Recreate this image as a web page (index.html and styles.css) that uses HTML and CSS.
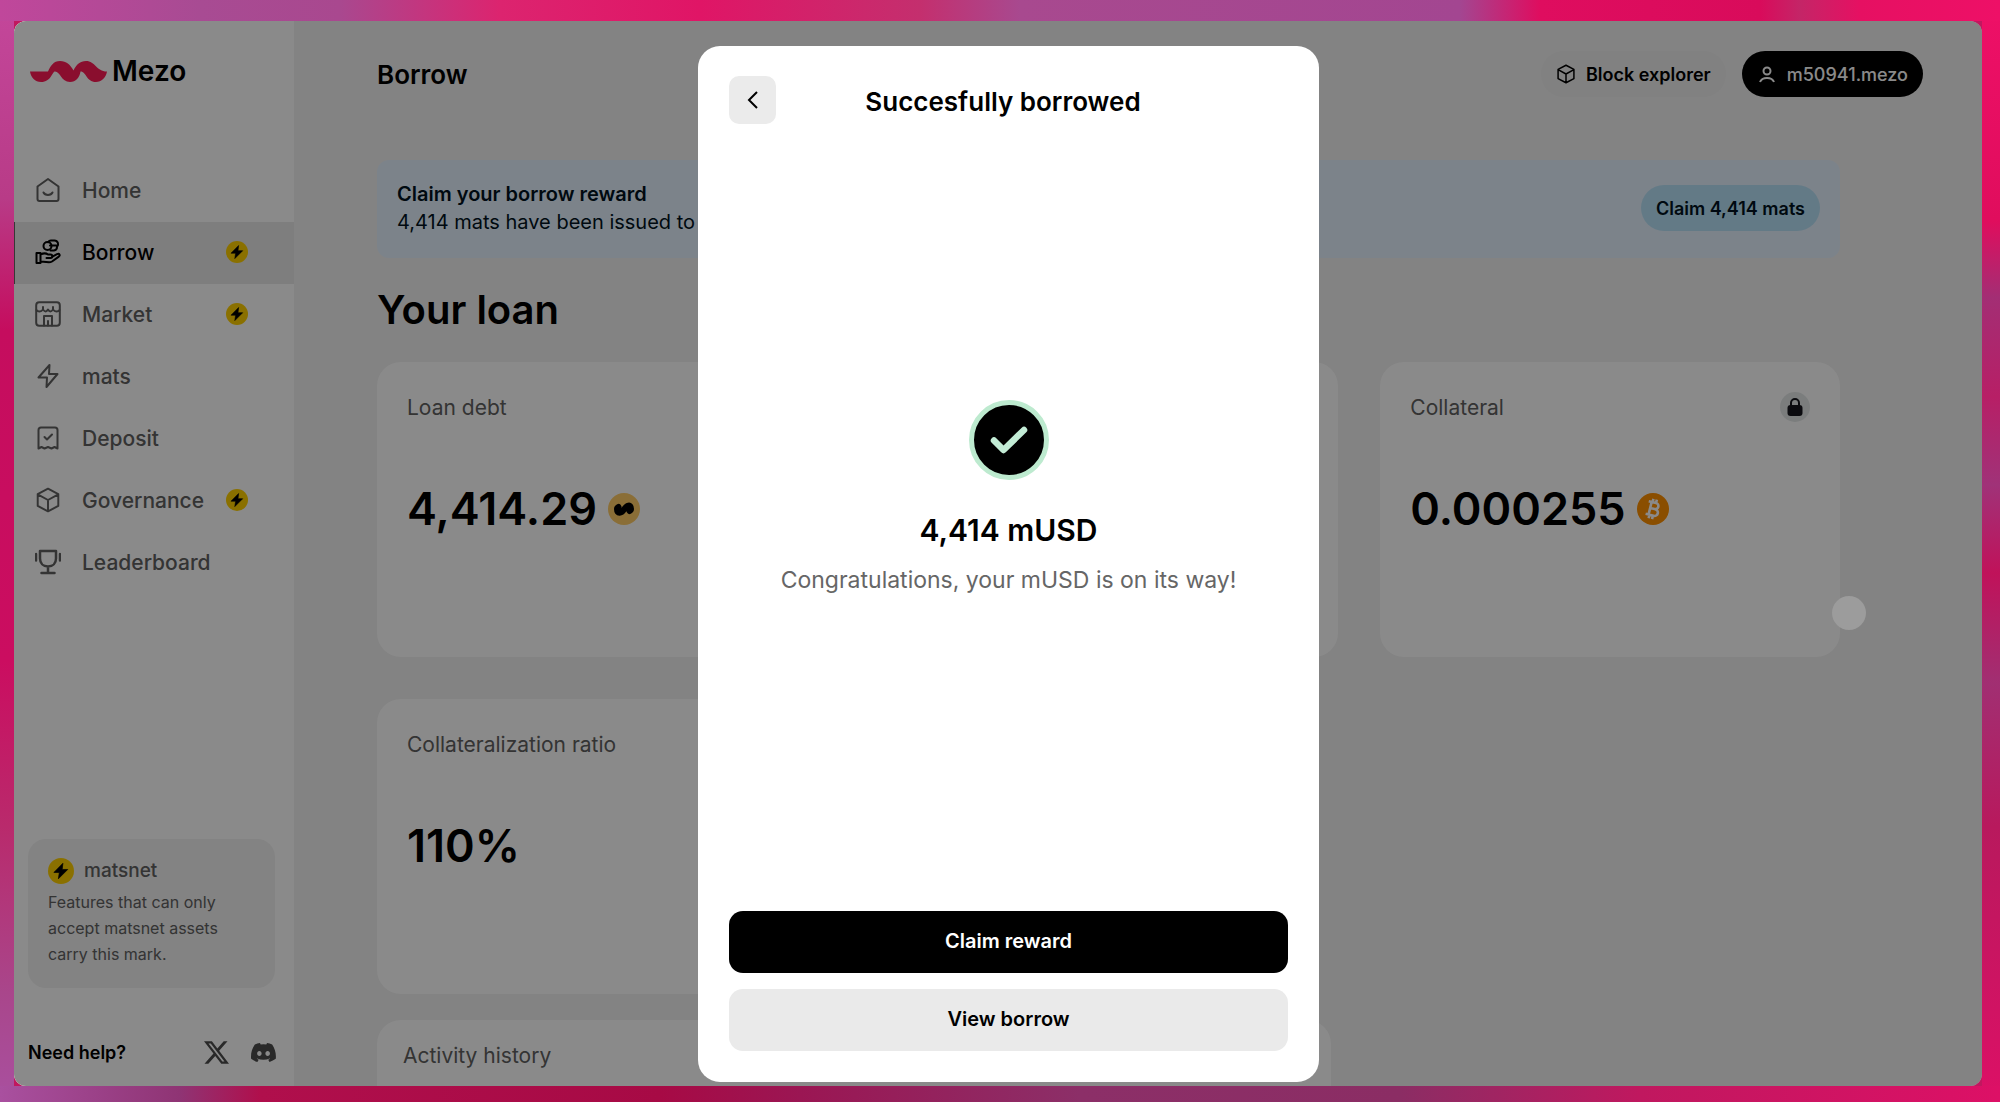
FILE: index.html
```html
<!DOCTYPE html>
<html lang="en">
<head>
  <meta charset="UTF-8" />
  <meta name="viewport" content="width=device-width, initial-scale=1.0" />
  <title>Mezo - Borrow</title>
  <link rel="stylesheet" href="styles.css">
</head>
<body>

  <!-- shared icons -->
  <svg class="sprite" aria-hidden="true">
    <symbol id="bolt-badge" viewBox="0 0 22 22">
      <circle cx="11" cy="11" r="11" fill="#ffd000" />
      <path d="M12.600 4.500 5 12.200h4.600l-.8 5.400 7.900-7.900h-4.700z" fill="#000" stroke="#000" stroke-width=".6" stroke-linejoin="round" />
    </symbol>
    <symbol id="cube" viewBox="0 0 24 24">
      <path d="M12 1.500 21.500 6.500v11L12 22.500 2.500 17.500v-11zM2.500 6.800 12 12l9.500-5.200M12 12v10.300" fill="none" stroke="currentColor" stroke-width="1.8" stroke-linejoin="round" />
    </symbol>
  </svg>

  <div class="window">

    <aside class="sidebar">
      <a class="logo" href="#">
        <svg width="77" height="21" viewBox="0 0 77 21">
          <path d="M0 10.500H18C20.500 5 23.500 0 30 0C36.500 0 40 3.500 43.500 9.500C46.500 3.500 50 0 56 0C65.500 0 66 10.500 77 10.500C76 16.500 71.500 21 66 21C56 21 56.500 10.500 50.500 10.500C49.500 16.500 46 21 40 21C31 21 30.500 10.500 25 10.500C22 10.500 21.500 21 11 21C5 21 1 16.500 0 10.500Z" fill="#ff1a56" />
        </svg>
        <span>Mezo</span>
      </a>

      <nav class="nav">
        <a href="#">
          <svg class="icon" viewBox="0 0 26 26"><path d="M13 2 23.500 9.500V22a2 2 0 0 1-2 2h-17a2 2 0 0 1-2-2V9.500zM8.500 15.500c1.500 3.200 7.500 3.200 9 0" /></svg>
          <span>Home</span>
        </a>
        <a href="#" class="active">
          <svg class="icon" viewBox="0 0 26 26"><path d="M1.500 14h4v10h-4zM5.500 15.500c3-1.500 5.500-1.500 7.500 0h2.500c2.500 0 2.500 3.500 0 3.500h-4M17 17.800l5-2.600c2.500-1.200 3.500 1 1.800 2.400L17 22.500c-1 .6-2 .8-3 .8L5.500 22.500" /><rect x="8.500" y="3" width="8" height="8" rx="4" /><path d="M13 3.200a4 4 0 0 1 3-1.700h3.500a3.800 3.800 0 0 1 2.500 6.500a3.500 3.500 0 0 1-3 3.500h-3.500M15 6.500h6.500" /></svg>
          <span>Borrow</span>
          <svg class="badge"><use href="#bolt-badge" /></svg>
        </a>
        <a href="#">
          <svg class="icon" viewBox="0 0 26 26"><rect x="1.200" y="1.200" width="23.600" height="23.600" rx="3" /><path d="M1.500 9c1.500 2 4.500 2 6.500-.5c2 2.500 3.500 2.500 5 0c1.500 2.500 3 2.500 5 0c2 2.500 5 2.500 6.500.5M8 8.500V6M18 8.500V6M9 24.500V15h8v9.500M13 24.500V20" /></svg>
          <span>Market</span>
          <svg class="badge"><use href="#bolt-badge" /></svg>
        </a>
        <a href="#">
          <svg class="icon" viewBox="0 0 26 26"><path d="M14.500 2 3.500 14.500H12L11.500 24 22.500 11H14z" /></svg>
          <span>mats</span>
        </a>
        <a href="#">
          <svg class="icon" viewBox="0 0 26 26"><path d="M3.500 23.500V5a2.500 2.500 0 0 1 2.500-2.500h14A2.500 2.500 0 0 1 22.500 5v18.500l-3-1.500-3 1.500-3.500-1.500-3.500 1.500-3-1.500zM9.500 12l2.500 2.500 5-5" /></svg>
          <span>Deposit</span>
        </a>
        <a href="#">
          <svg class="icon"><use href="#cube" /></svg>
          <span>Governance</span>
          <svg class="badge"><use href="#bolt-badge" /></svg>
        </a>
        <a href="#">
          <svg class="icon" viewBox="0 0 26 26"><path d="M5 2h16v7.500c0 4.500-3 8-8 8s-8-3.500-8-8zM13 17.500V24M6.500 24h13M1 5v6.500M25 5v6.500" stroke-width="2.500" /></svg>
          <span>Leaderboard</span>
        </a>
      </nav>

      <div class="matsnet">
        <h3><svg class="badge"><use href="#bolt-badge" /></svg> matsnet</h3>
        <p>Features that can only accept matsnet assets carry this mark.</p>
      </div>

      <div class="help">
        <a href="#">Need help?</a>
        <a href="#" class="social" aria-label="X">
          <svg viewBox="0 0 24 24"><path d="M18.901 1.153h3.680l-8.040 9.190L24 22.846h-7.406l-5.800-7.584-6.638 7.584H.474l8.600-9.830L0 1.154h7.594l5.243 6.932ZM17.610 20.644h2.039L6.486 3.240H4.298Z" /></svg>
        </a>
        <a href="#" class="social" aria-label="Discord">
          <svg viewBox="0 0 24 24"><path fill-rule="evenodd" d="M20.300 4.400a19.800 19.800 0 0 0-4.900-1.500l-.7 1.300a18 18 0 0 0-5.400 0l-.7-1.300a19.700 19.700 0 0 0-4.900 1.500C.5 9-.3 13.600.1 18.100a20 20 0 0 0 6 3l1.300-2.100-1.900-.9.4-.4c3.900 1.800 8.200 1.800 12.100 0l.4.4-1.900.9 1.300 2.100a19.800 19.800 0 0 0 6-3c.5-5.200-.8-9.700-3.500-13.700zM8 15.300c-1.200 0-2.100-1.100-2.100-2.400s.9-2.400 2.100-2.400 2.200 1.100 2.200 2.400-1 2.400-2.200 2.400zm8 0c-1.200 0-2.200-1.100-2.200-2.400s1-2.400 2.200-2.400 2.200 1.100 2.200 2.400-1 2.400-2.200 2.400z" /></svg>
        </a>
      </div>
    </aside>

    <main class="main">
      <header class="topbar">
        <h1>Borrow</h1>
        <a href="#" class="pill">
          <svg><use href="#cube" /></svg>
          Block explorer
        </a>
        <button type="button" class="pill account">
          <svg viewBox="0 0 20 20"><circle cx="10" cy="7" r="3.500" /><path d="M3 18c2-5.500 12-5.500 14 0" /></svg>
          m50941.mezo
        </button>
      </header>

      <div class="content">
        <section class="banner">
          <div>
            <h4>Claim your borrow reward</h4>
            <p>4,414 mats have been issued to your account.</p>
          </div>
          <button type="button" class="pill claim">Claim 4,414 mats</button>
        </section>

        <h2>Your loan</h2>

        <div class="cards">
          <section class="card">
            <h3>Loan debt</h3>
            <p class="amount">4,414.29
              <svg class="coin" viewBox="0 0 32 32"><circle cx="16" cy="16" r="16" fill="#ffcc66" /><path d="M9 16c0 5.500 4.500 4.500 7 .5s7-6 7-.5M9 16c0-1 .5-1.500 1.500-2M23 16c0 1-.5 1.500-1.500 2" fill="none" stroke="#000" stroke-width="6" stroke-linecap="round" /></svg>
            </p>
          </section>
          <section class="card"></section>
          <section class="card">
            <h3>Collateral
              <svg class="lock" viewBox="0 0 30 30"><circle cx="15" cy="15" r="15" fill="#e4e8e8" /><path d="M11 14v-3a4 4 0 0 1 8 0v3" fill="none" stroke="#16161c" stroke-width="2" /><rect x="7.500" y="13" width="15" height="11" rx="3" fill="#16161c" /></svg>
            </h3>
            <p class="amount">0.000255
              <svg class="coin" viewBox="0 0 32 32"><circle cx="16" cy="16" r="16" fill="#ff9000" /><g transform="rotate(14 16 16)" fill="none" stroke="#fff" stroke-width="2.600"><path d="M10 9.500h7.500a3 3 0 0 1 0 6.200H13M17.500 15.700h.8a3.300 3.300 0 0 1 0 6.800H10M13 9.500v13M14 6v3.500M17.500 6v3.500M14 22.500V26M17.500 22.500V26" /></g></svg>
            </p>
          </section>
          <section class="card">
            <h3>Collateralization ratio</h3>
            <p class="amount">110%</p>
          </section>
        </div>

        <section class="card activity">
          <h3>Activity history</h3>
        </section>
      </div>
    </main>

    <div class="overlay">
      <div class="modal" role="dialog" aria-labelledby="modal-title">
        <div class="modal-head">
          <button type="button" class="back" aria-label="Back">
            <svg width="20" height="20" viewBox="0 0 20 20"><path d="M14 2 6 10l8 8" /></svg>
          </button>
          <h2 id="modal-title">Succesfully borrowed</h2>
        </div>

        <div class="modal-body">
          <svg width="80" height="80" viewBox="0 0 80 80">
            <circle cx="40" cy="40" r="37.500" fill="#000" stroke="#bdeacf" stroke-width="5" />
            <path d="M25 40.500 34.500 50 55 30" fill="none" stroke="#c3ecd6" stroke-width="6.500" stroke-linecap="round" stroke-linejoin="round" />
          </svg>
          <h3>4,414 mUSD</h3>
          <p>Congratulations, your mUSD is on its way!</p>
        </div>

        <div class="modal-actions">
          <button type="button" class="primary">Claim reward</button>
          <button type="button">View borrow</button>
        </div>
      </div>
    </div>

    <div class="pointer"></div>
  </div>

</body>
</html>
```
FILE: styles.css
```css
* {
  box-sizing: border-box;
}

body {
  margin: 0;
  height: 100vh;
  padding: 21px 18px 16px 14px;
  font-family: Inter, "Liberation Sans", sans-serif;
  color: #000;
  background:
    linear-gradient(90deg, #c0479b, #a84b93 10%, #a9488f 17%, #dc246f 25%, #e01566 35%, #c42f6e 46%, #a8498f 51%, #a34691 73%, #df0d5f 77%, #d90b5b 88%, #c42567 90%, #e61062 93%, #ee1067) top / 100% 21px no-repeat,
    linear-gradient(90deg, #a9509f, #8f3474 9%, #b00f4c 13%, #a70a45 33%, #9b1653 40%, #8c2f68 54%, #8b2d64 70%, #c0185f 82%, #dd1066) bottom / 100% 16px no-repeat,
    linear-gradient(#c4479b, #b83b87 18%, #c50d5e 30%, #cb0d60 60%, #b92a6c 75%, #a9468b 90%, #a9509f) left / 14px 100% no-repeat,
    linear-gradient(#ee1067, #e00d5d 20%, #a32e74 27%, #b71f66 36%, #a03278 44%, #c0125a 52%, #a12f72 62%, #b8195d 75%, #dd1066) right / 18px 100% no-repeat,
    #c0185f;
}

h1, h2, h3, h4, p {
  margin: 0;
}

a {
  color: inherit;
  text-decoration: none;
}

button {
  font-family: inherit;
  border: none;
  cursor: pointer;
}

.sprite {
  position: absolute;
  width: 0;
  height: 0;
}

.window {
  position: relative;
  display: flex;
  height: 100%;
  border-radius: 12px;
  overflow: hidden;
  background: #f2f2f2;
}

/* sidebar */
.sidebar {
  display: flex;
  flex-direction: column;
  width: 280px;
  flex-shrink: 0;
  background: #fff;
}

.logo {
  display: flex;
  align-items: center;
  gap: 5px;
  height: 40px;
  margin: 30px 0 69px 16px;
  font-size: 28px;
  font-weight: 600;
}

.nav a {
  display: flex;
  align-items: center;
  height: 62px;
  padding: 0 46px 2px 21px;
  color: #606060;
  font-size: 21px;
  font-weight: 500;
}

.nav a.active {
  background: #e9e9e9;
  color: #000;
  box-shadow: inset 1px 0 #666;
}

.nav span {
  flex: 1;
  margin-left: 21px;
}

.icon {
  width: 26px;
  height: 26px;
  fill: none;
  stroke: currentColor;
  stroke-width: 2;
  stroke-linecap: round;
  stroke-linejoin: round;
}

.badge {
  width: 22px;
  height: 22px;
}

.matsnet {
  margin: auto 19px 0 14px;
  height: 149px;
  padding: 18px 20px;
  border-radius: 18px;
  background: #f2f2f2;
  color: #606060;
  font-size: 16px;
  line-height: 26px;
}

.matsnet h3 {
  display: flex;
  align-items: center;
  gap: 10px;
  height: 28px;
  margin-bottom: 4px;
  font-size: 19px;
  font-weight: 500;
}

.matsnet .badge {
  width: 26px;
  height: 26px;
}

.help {
  display: flex;
  align-items: center;
  gap: 22px;
  height: 28px;
  margin: 50px 18px 20px 14px;
  font-size: 18px;
  font-weight: 600;
}

.help a:first-child {
  flex: 1;
}

.social,
.social svg {
  display: block;
  width: 25px;
  height: 25px;
  fill: #4c4c4c;
}

/* main */
.main {
  flex: 1;
  padding: 30px 59px 0 83px;
}

.topbar {
  display: flex;
  align-items: center;
  gap: 16px;
}

.topbar h1 {
  flex: 1;
  font-size: 26px;
  font-weight: 600;
}

.pill {
  display: flex;
  align-items: center;
  gap: 10px;
  height: 46px;
  padding: 0 15px;
  border-radius: 23px;
  background: #eee;
  color: #000;
  font-size: 18px;
  font-weight: 600;
}

.pill svg {
  width: 20px;
  height: 20px;
  fill: none;
  stroke: currentColor;
  stroke-width: 2;
}

.account {
  background: #000;
  color: #fff;
  font-weight: 500;
}

.claim {
  background: #b8e2f8;
  color: #001220;
}

.content {
  margin: 63px 83px 0 0;
}

.banner {
  display: flex;
  align-items: center;
  justify-content: space-between;
  height: 98px;
  padding: 0 20px 2px;
  border-radius: 12px;
  background: #e6f2ff;
  color: #001220;
  font-size: 20px;
  line-height: 28px;
}

.banner h4 {
  font-size: 20px;
  font-weight: 600;
}

.content h2 {
  margin: 24px 0;
  font-size: 40px;
  font-weight: 600;
  line-height: 56px;
}

.cards {
  display: grid;
  grid-template-columns: repeat(3, 1fr);
  gap: 42px;
}

.card {
  height: 295px;
  padding: 31px 30px;
  border-radius: 24px;
  background: #fff;
}

.card h3 {
  display: flex;
  justify-content: space-between;
  align-items: center;
  height: 28px;
  color: #606060;
  font-size: 21px;
  font-weight: 400;
}

.lock {
  width: 30px;
  height: 30px;
}

.amount {
  display: flex;
  align-items: center;
  gap: 11px;
  margin-top: 60px;
  font-size: 45px;
  font-weight: 600;
  line-height: 56px;
}

.coin {
  width: 32px;
  height: 32px;
}

.activity {
  width: 954px;
  margin-top: 26px;
  padding: 21px 26px;
}

/* modal */
.overlay {
  position: absolute;
  inset: 0;
  display: flex;
  justify-content: center;
  padding: 25px 0 4px 21px;
  background: rgba(0, 0, 0, 0.46);
}

.modal {
  display: flex;
  flex-direction: column;
  width: 621px;
  padding: 30px 31px 31px;
  border-radius: 22px;
  background: #fff;
}

.modal-head {
  display: grid;
  grid-template-columns: 47px 1fr 58px;
}

.modal-head h2 {
  padding-top: 10px;
  font-size: 26px;
  font-weight: 600;
  line-height: 32px;
  text-align: center;
}

.back {
  display: grid;
  place-items: center;
  height: 48px;
  padding: 0;
  border-radius: 10px;
  background: #ebebeb;
}

.back path {
  fill: none;
  stroke: #000;
  stroke-width: 2;
}

.modal-body {
  display: flex;
  flex: 1;
  flex-direction: column;
  align-items: center;
  justify-content: center;
  padding-bottom: 40px;
}

.modal-body h3 {
  margin: 32px 0 16px;
  font-size: 30px;
  font-weight: 600;
  line-height: 36px;
}

.modal-body p {
  color: #666;
  font-size: 23px;
  line-height: 32px;
}

.modal-actions {
  display: flex;
  flex-direction: column;
  gap: 16px;
}

.modal-actions button {
  height: 62px;
  padding-bottom: 4px;
  border-radius: 14px;
  background: #eaeaea;
  color: #000;
  font-size: 20px;
  font-weight: 600;
}

.modal-actions .primary {
  background: #000;
  color: #fff;
}

/* click highlight */
.pointer {
  position: absolute;
  top: 575px;
  right: 116px;
  width: 34px;
  height: 34px;
  border-radius: 50%;
  background: #9c9c9c;
}
```
